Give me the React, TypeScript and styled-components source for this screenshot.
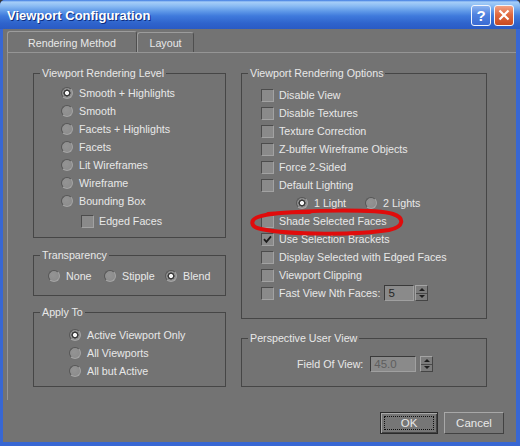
import styled, { createGlobalStyle } from "styled-components";

const GlobalStyle = createGlobalStyle`
  html, body { margin: 0; padding: 0; background: #3a3a3a; }
  body { font-family: "Liberation Sans", Arial, sans-serif; }
  * { box-sizing: border-box; }
`;

const BG = "#737373";
const TEXT = "#e8e8e8";

const Window = styled.div`
  width: 520px;
  height: 446px;
  display: flex;
  flex-direction: column;
  background: #3867d3;
  border-radius: 5px 5px 0 0;
  overflow: hidden;
`;

const TitleBar = styled.div`
  height: 29px;
  flex: none;
  display: flex;
  align-items: center;
  padding: 0 6px 0 7px;
  background: linear-gradient(
    180deg,
    #3b78e0 0px,
    #a6cef8 2px,
    #8abbf3 6px,
    #609ae8 11px,
    #3f7adc 16px,
    #2f64cc 23px,
    #2a5bc4 29px
  );
`;

const Title = styled.div`
  flex: 1;
  padding-top: 2px;
  color: #fff;
  font-weight: bold;
  font-size: 13px;
  text-shadow: 1px 1px 0 #0d2c7e;
`;

const CaptionButton = styled.div<{ $variant: "help" | "close" }>`
  width: 20px;
  height: 21px;
  margin-left: 3px;
  margin-top: 1px;
  border: 1px solid #f2f5fc;
  border-radius: 3px;
  display: grid;
  place-items: center;
  color: #fff;
  font-weight: bold;
  font-size: 15px;
  background: ${({ $variant }) =>
    $variant === "help"
      ? "linear-gradient(180deg, #8db4f0 0%, #4f82e0 45%, #3a6bd4 100%)"
      : "linear-gradient(180deg, #f3a285 0%, #e06a40 45%, #c94a20 100%)"};
`;

const Body = styled.div`
  flex: 1;
  margin: 0 4px 4px 3px;
  padding-top: 2px;
  background: ${BG};
  display: flex;
  flex-direction: column;
  color: ${TEXT};
  font-size: 10.7px;
`;

const TabRow = styled.div`
  height: 21px;
  display: flex;
  align-items: flex-end;
  padding-left: 4px;
`;

const Tab = styled.div<{ $active?: boolean; $w: number }>`
  width: ${({ $w }) => $w}px;
  height: ${({ $active }) => ($active ? 21 : 20)}px;
  display: flex;
  align-items: center;
  justify-content: center;
  border: 1px solid;
  border-bottom: none;
  border-color: #9c9c9c #4f4f4f transparent #9c9c9c;
  border-radius: 3px 3px 0 0;
  padding-top: 1px;
`;

const Panel = styled.div`
  border-top: 1px solid #959595;
  border-left: 1px solid #959595;
  margin-left: 4px;
  padding: 20px 0 13px 25px;
  display: flex;
  gap: 15px;
`;

const Column = styled.div<{ $w: number }>`
  width: ${({ $w }) => $w}px;
  display: flex;
  flex-direction: column;
`;

const Group = styled.div<{ $h: number; $pt: number; $pl: number; $mt?: number }>`
  position: relative;
  height: ${({ $h }) => $h}px;
  margin-top: ${({ $mt }) => $mt ?? 0}px;
  padding: ${({ $pt, $pl }) => `${$pt}px 0 0 ${$pl}px`};
  border: 1px solid #464646;
`;

const Legend = styled.span`
  position: absolute;
  top: -8px;
  left: 6px;
  padding: 0 2px;
  line-height: 14px;
  background: ${BG};
  white-space: nowrap;
`;

const Row = styled.div<{ $indent?: number; $mt?: number; $gap?: number }>`
  height: 18px;
  display: flex;
  align-items: center;
  gap: ${({ $gap }) => $gap ?? 0}px;
  margin-left: ${({ $indent }) => $indent ?? 0}px;
  margin-top: ${({ $mt }) => $mt ?? 0}px;
  white-space: nowrap;
`;

const Option = styled.div<{ $w?: number; $check?: boolean }>`
  display: flex;
  align-items: center;
  gap: ${({ $check }) => ($check ? 5 : 6)}px;
  width: ${({ $w }) => ($w ? `${$w}px` : "auto")};
  flex: none;
`;

const RadioDot = styled.span<{ $on?: boolean }>`
  width: 12px;
  height: 12px;
  flex: none;
  border-radius: 50%;
  border: 1px solid;
  border-color: #575757 #a4a4a4 #a4a4a4 #575757;
  background: ${({ $on }) =>
    $on
      ? "radial-gradient(circle, #f6f6f6 0 1.8px, #3a3a3a 2.3px 3.3px, #8e8e8e 3.8px)"
      : "radial-gradient(circle at 40% 40%, #949494 0, #8a8a8a 100%)"};
`;

const CheckBox = styled.span`
  width: 13px;
  height: 13px;
  flex: none;
  border: 1px solid;
  border-color: #4c4c4c #a2a2a2 #a2a2a2 #4c4c4c;
  background: #8a8a8a;
  display: grid;
  place-items: center;
`;

const Field = styled.div<{ $w: number; $disabled?: boolean }>`
  width: ${({ $w }) => $w}px;
  height: 16px;
  border: 1px solid;
  border-color: #3a3a3a #a0a0a0 #a0a0a0 #3a3a3a;
  background: #8a8a8a;
  color: ${({ $disabled }) => ($disabled ? "#5e5e5e" : "#262626")};
  padding-left: 3px;
  line-height: 14px;
  font-size: 11.5px;
`;

const Spinner = styled.div`
  width: 13px;
  height: 16px;
  margin-left: -3px;
  display: flex;
  flex-direction: column;
  border: 1px solid;
  border-color: #a4a4a4 #454545 #454545 #a4a4a4;
  background: #7c7c7c;
`;

const SpinHalf = styled.div<{ $down?: boolean }>`
  flex: 1;
  display: grid;
  place-items: center;
  border-top: ${({ $down }) => ($down ? "1px solid #4a4a4a" : "none")};
  &::after {
    content: "";
    border-left: 3px solid transparent;
    border-right: 3px solid transparent;
    ${({ $down }) =>
      $down ? "border-top: 3px solid #1e1e1e;" : "border-bottom: 3px solid #1e1e1e;"}
  }
`;

const Scribble = styled.svg`
  position: absolute;
  left: 6px;
  top: 134px;
  pointer-events: none;
`;

const Footer = styled.div`
  margin-top: 12px;
  padding-right: 12px;
  display: flex;
  justify-content: flex-end;
  gap: 6px;
`;

const Button = styled.div<{ $w: number; $default?: boolean }>`
  width: ${({ $w }) => $w}px;
  height: 22px;
  display: grid;
  place-items: center;
  font-size: 11.5px;
  border: 1px solid;
  border-color: ${({ $default }) =>
    $default ? "#2a2a2a" : "#a8a8a8 #424242 #424242 #a8a8a8"};
  background: #767676;
  outline: ${({ $default }) => ($default ? "1px dotted #111" : "none")};
  outline-offset: -5px;
  box-shadow: ${({ $default }) =>
    $default ? "inset 1px 1px 0 #a8a8a8, inset -1px -1px 0 #444" : "none"};
`;

const Radio = ({ label, on, w }: { label: string; on?: boolean; w?: number }) => (
  <Option $w={w}>
    <RadioDot $on={on} />
    <span>{label}</span>
  </Option>
);

const Check = ({ label, on }: { label: string; on?: boolean }) => (
  <Option $check>
    <CheckBox>
      {on && (
        <svg width="9" height="9" viewBox="0 0 9 9">
          <path d="M1 4.2 L3.4 6.8 L8 1.4" fill="none" stroke="#1c1c1c" strokeWidth="1.8" />
        </svg>
      )}
    </CheckBox>
    <span>{label}</span>
  </Option>
);

const Spin = () => (
  <Spinner>
    <SpinHalf />
    <SpinHalf $down />
  </Spinner>
);

const levels = [
  "Smooth + Highlights",
  "Smooth",
  "Facets + Highlights",
  "Facets",
  "Lit Wireframes",
  "Wireframe",
  "Bounding Box",
];

const topOptions = [
  "Disable View",
  "Disable Textures",
  "Texture Correction",
  "Z-buffer Wireframe Objects",
  "Force 2-Sided",
  "Default Lighting",
];

export default function App() {
  return (
    <>
      <GlobalStyle />
      <Window>
        <TitleBar>
          <Title>Viewport Configuration</Title>
          <CaptionButton $variant="help">?</CaptionButton>
          <CaptionButton $variant="close">
            <svg width="12" height="12" viewBox="0 0 12 12">
              <path d="M1.5 1.5 L10.5 10.5 M10.5 1.5 L1.5 10.5" stroke="#fff" strokeWidth="2.2" />
            </svg>
          </CaptionButton>
        </TitleBar>
        <Body>
          <TabRow>
            <Tab $active $w={130}>Rendering Method</Tab>
            <Tab $w={57}>Layout</Tab>
          </TabRow>
          <Panel>
            <Column $w={193}>
              <Group $h={165} $pt={10} $pl={27}>
                <Legend>Viewport Rendering Level</Legend>
                {levels.map((l, i) => (
                  <Row key={l}>
                    <Radio label={l} on={i === 0} />
                  </Row>
                ))}
                <Row $indent={20} $mt={2}>
                  <Check label="Edged Faces" />
                </Row>
              </Group>
              <Group $h={41} $pt={11} $pl={14} $mt={17}>
                <Legend>Transparency</Legend>
                <Row>
                  <Radio label="None" w={56} />
                  <Radio label="Stipple" w={61} />
                  <Radio label="Blend" on />
                </Row>
              </Group>
              <Group $h={75} $pt={13} $pl={35} $mt={16}>
                <Legend>Apply To</Legend>
                <Row>
                  <Radio label="Active Viewport Only" on />
                </Row>
                <Row>
                  <Radio label="All Viewports" />
                </Row>
                <Row>
                  <Radio label="All but Active" />
                </Row>
              </Group>
            </Column>
            <Column $w={246}>
              <Group $h={246} $pt={12} $pl={19}>
                <Legend>Viewport Rendering Options</Legend>
                {topOptions.map((o) => (
                  <Row key={o}>
                    <Check label={o} />
                  </Row>
                ))}
                <Row $indent={35}>
                  <Radio label="1 Light" on w={69} />
                  <Radio label="2 Lights" />
                </Row>
                <Row>
                  <Check label="Shade Selected Faces" />
                </Row>
                <Row>
                  <Check label="Use Selection Brackets" on />
                </Row>
                <Row>
                  <Check label="Display Selected with Edged Faces" />
                </Row>
                <Row>
                  <Check label="Viewport Clipping" />
                </Row>
                <Row $gap={4}>
                  <Check label="Fast View Nth Faces:" />
                  <Field $w={30}>5</Field>
                  <Spin />
                </Row>
                <Scribble width="160" height="30" viewBox="0 0 160 30">
                  <path
                    d="M20 6 C60 2, 128 1, 145 6 C157 10, 156 19, 141 22 C110 27, 42 27, 13 21 C2 19, 2 12, 10 9 C18 6, 40 4, 62 4"
                    fill="none"
                    stroke="#e00c0c"
                    strokeWidth="4"
                    strokeLinecap="round"
                  />
                </Scribble>
              </Group>
              <Group $h={49} $pt={16} $pl={55} $mt={19}>
                <Legend>Perspective User View</Legend>
                <Row $gap={7}>
                  <span>Field Of View:</span>
                  <Field $w={46} $disabled>
                    45.0
                  </Field>
                  <Spin />
                </Row>
              </Group>
            </Column>
          </Panel>
          <Footer>
            <Button $w={58} $default>
              OK
            </Button>
            <Button $w={60}>Cancel</Button>
          </Footer>
        </Body>
      </Window>
    </>
  );
}
